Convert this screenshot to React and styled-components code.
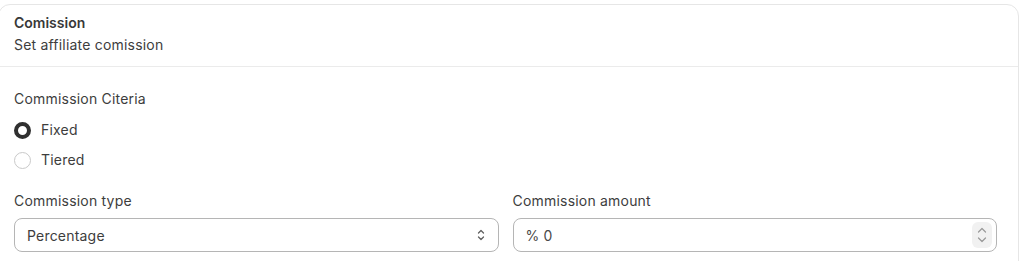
import React from 'react';
import styled, { createGlobalStyle } from 'styled-components';

const GlobalStyle = createGlobalStyle`
  body {
    margin: 0;
    background: #fff;
    font-family: Inter, "Noto Sans", sans-serif;
    color: #3d3d3d;
    font-size: 14px;
    letter-spacing: 0.2px;
    overflow: hidden;
  }
`;

const Card = styled.div`
  margin: 4px 5px 0 -2px;
  border: 1px solid #e6e6e6;
  border-radius: 12px;
  background: #fff;
  height: 300px;
`;

const Header = styled.div`
  padding: 7px 15px 10px;
  border-bottom: 1px solid #ebebeb;
`;

const Title = styled.div`
  font-weight: 600;
  line-height: 22px;
  letter-spacing: 0;
  color: #383838;
`;

const Subtitle = styled.div`
  line-height: 22px;
`;

const Body = styled.div`
  padding: 21px 15px 0;
`;

const Label = styled.div`
  line-height: 22px;
  margin-bottom: ${p => p.gap || 6}px;
`;

const RadioRow = styled.label`
  display: flex;
  align-items: center;
  gap: 10px;
  height: 30px;
  line-height: 20px;
`;

const Radio = styled.span`
  box-sizing: border-box;
  width: 17px;
  height: 17px;
  border-radius: 50%;
  border: ${p => (p.checked ? '4.5px solid #303030' : '1px solid #c9c9c9')};
  background: #fff;
`;

const Grid = styled.div`
  display: grid;
  grid-template-columns: 1fr 1fr;
  gap: 14px;
  margin-top: 15px;
  padding-right: 6px;
`;

const Field = styled.div`
  display: flex;
  flex-direction: column;
`;

const Box = styled.div`
  box-sizing: border-box;
  height: 34px;
  border: 1px solid #b5b5b5;
  border-radius: 8px;
  display: flex;
  align-items: center;
  justify-content: space-between;
  padding: 0 4px 0 12px;
`;

const Value = styled.span`
  color: ${p => p.muted ? '#4a4a4a' : '#3d3d3d'};
`;

const Spinner = styled.div`
  width: 20px;
  height: 26px;
  border-radius: 6px;
  background: #f1f1f1;
  display: flex;
  flex-direction: column;
  align-items: center;
  justify-content: center;
  gap: 2px;
`;

const Chevrons = () => (
  <svg width="14" height="16" viewBox="0 0 14 16" fill="none" stroke="#616161" strokeWidth="1.3" strokeLinecap="round" strokeLinejoin="round" style={{ marginRight: 6 }}>
    <path d="M4.5 6 7 3.5 9.5 6" />
    <path d="M4.5 10 7 12.5 9.5 10" />
  </svg>
);

const Chevron = ({ up }) => (
  <svg width="12" height="8" viewBox="0 0 12 8" fill="none" stroke="#999" strokeWidth="1.2" strokeLinecap="round" strokeLinejoin="round">
    <path d={up ? 'M2.5 6 6 2.5 9.5 6' : 'M2.5 2 6 5.5 9.5 2'} />
  </svg>
);

export default function App() {
  return (
    <>
      <GlobalStyle />
      <Card>
        <Header>
          <Title>Comission</Title>
          <Subtitle>Set affiliate comission</Subtitle>
        </Header>
        <Body>
          <Label gap={5}>Commission Citeria</Label>
          <RadioRow>
            <Radio checked />
            Fixed
          </RadioRow>
          <RadioRow>
            <Radio />
            Tiered
          </RadioRow>
          <Grid>
            <Field>
              <Label gap={6}>Commission type</Label>
              <Box>
                <Value>Percentage</Value>
                <Chevrons />
              </Box>
            </Field>
            <Field>
              <Label gap={6}>Commission amount</Label>
              <Box>
                <Value muted>% 0</Value>
                <Spinner>
                  <Chevron up />
                  <Chevron />
                </Spinner>
              </Box>
            </Field>
          </Grid>
        </Body>
      </Card>
    </>
  );
}
